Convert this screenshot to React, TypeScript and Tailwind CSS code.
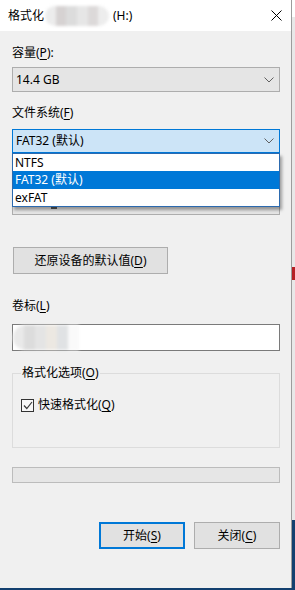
import React from 'react';

const font = 'font-["Noto_Sans","Noto_Sans_CJK_SC",sans-serif]';

function Chevron() {
    return (
        <svg width="10" height="6" viewBox="0 0 10 6" className="shrink-0">
            <path d="M0.5 0.5 L5 5 L9.5 0.5" fill="none" stroke="#606060" strokeWidth="1" />
        </svg>
    );
}

function Blur({ cells, className }: { cells: string[]; className: string }) {
    return (
        <div className={`flex overflow-hidden blur-[1.5px] ${className}`}>
            {cells.map((c, i) => (
                <div key={i} className="flex-1 h-full" style={{ background: c }} />
            ))}
        </div>
    );
}

export default function App() {
    return (
        <div className={`w-[295px] h-[590px] flex flex-col bg-[#13406f] text-[12px] leading-[16px] text-black ${font}`}>
            <div className="flex h-[588px]">
                {/* Window */}
                <div className="w-[292px] h-full flex flex-col border-r border-[#9c9c9c]">
                    {/* Title bar */}
                    <div className="h-[31px] bg-white flex items-center pl-2 pr-[9px]">
                        <span>格式化</span>
                        <Blur
                            className="w-[64px] h-[20px] rounded-full ml-[1px]"
                            cells={['#ececec', '#d6d2d2', '#dcdcdc', '#e6e6e6', '#dcd9d9', '#ededed']}
                        />
                        <span className="ml-1">(H:)</span>
                        <div className="flex-1" />
                        <svg width="11" height="11" viewBox="0 0 11 11">
                            <path d="M0.5 0.5 L10.5 10.5 M10.5 0.5 L0.5 10.5" stroke="#000" strokeWidth="1" />
                        </svg>
                    </div>

                    {/* Body */}
                    <div className="flex-1 bg-[#f0f0f0] px-3 pt-[14px] flex flex-col">
                        <div>容量(<u className="underline-offset-2">P</u>):</div>
                        <div className="mt-[6px] w-[268px] h-[25px] bg-[#e5e5e5] border border-[#adadad] flex items-center pl-[3px] pr-[5px]">
                            <span className="flex-1">14.4 GB</span>
                            <Chevron />
                        </div>

                        <div className="mt-[13px]">文件系统(<u className="underline-offset-2">F</u>)</div>
                        <div className="relative mt-[8px] w-[268px] h-[24px] bg-[#cce4f7] border border-[#0078d7] flex items-center pl-[3px] pr-[5px]">
                            <span className="flex-1">FAT32 (默认)</span>
                            <Chevron />
                            {/* open list */}
                            <div className="absolute left-[-1px] top-[23px] w-[268px] z-10 bg-white border border-[#2c6aaf] shadow-[2px_3px_3px_rgba(0,0,0,0.35)] flex flex-col">
                                <div className="h-[17px] pl-[2px] flex items-center">NTFS</div>
                                <div className="h-[18px] pl-[2px] flex items-center bg-[#0078d7] text-white">FAT32 (默认)</div>
                                <div className="h-[17px] pl-[2px] flex items-center">exFAT</div>
                            </div>
                        </div>

                        {/* allocation size label + combo, hidden under the open list */}
                        <div className="mt-[14px] h-[16px]" />
                        <div className="mt-[8px] w-[268px] h-[24px] bg-[#e5e5e5] border border-[#adadad] flex items-end pl-[38px] pb-[5px]">
                            <div className="w-[6px] h-[2px] bg-[#555]" />
                        </div>

                        <button className="mt-[32px] ml-[1px] w-[155px] h-[27px] bg-[#e1e1e1] border border-[#adadad] flex items-center justify-center">
                            还原设备的默认值(<u className="underline-offset-2">D</u>)
                        </button>

                        <div className="mt-[24px]">卷标(<u className="underline-offset-2">L</u>)</div>
                        <div className="mt-[10px] w-[268px] h-[27px] bg-white border border-[#7a7a7a] flex items-center">
                            <Blur
                                className="w-[66px] h-[25px] rounded-l-full"
                                cells={['#e9e9e9', '#dcdcdc', '#e4e4e4', '#ece8e2', '#e0e2e4', '#fafafa']}
                            />
                        </div>

                        <div className="relative mt-[22px] w-[268px] h-[75px] border border-[#dcdcdc] pt-[23px] pl-[8px]">
                            <span className="absolute left-[8px] top-[-9px] bg-[#f0f0f0] px-[1px]">
                                格式化选项(<u className="underline-offset-2">O</u>)
                            </span>
                            <div className="flex items-center gap-[4px]">
                                <div className="w-[13px] h-[13px] border border-[#333] bg-[#f7f7f7] flex items-center justify-center">
                                    <svg width="10" height="9" viewBox="0 0 10 9">
                                        <path d="M1 4.5 L3.8 7.5 L9 1" fill="none" stroke="#3a3a3a" strokeWidth="1.2" />
                                    </svg>
                                </div>
                                <span>快速格式化(<u className="underline-offset-2">Q</u>)</span>
                            </div>
                        </div>

                        <div className="mt-[19px] w-[268px] h-[16px] bg-[#e6e6e6] border border-[#bcbcbc]" />

                        <div className="mt-[39px] w-[268px] flex justify-end gap-[9px]">
                            <button className="w-[86px] h-[27px] bg-[#e1e1e1] border-2 border-[#0078d7] flex items-center justify-center">
                                开始(<u className="underline-offset-2">S</u>)
                            </button>
                            <button className="w-[86px] h-[27px] bg-[#e1e1e1] border border-[#adadad] flex items-center justify-center">
                                关闭(<u className="underline-offset-2">C</u>)
                            </button>
                        </div>
                    </div>
                </div>

                {/* Desktop peeking at the right */}
                <div className="flex-1 flex flex-col">
                    <div className="h-[17px] bg-white" />
                    <div className="h-[250px] bg-[#e8e8e8]" />
                    <div className="h-[13px] bg-[#b51f24]" />
                    <div className="h-[240px] bg-[#e8e8e8]" />
                    <div className="flex-1 bg-[#13406f]" />
                </div>
            </div>
        </div>
    );
}
